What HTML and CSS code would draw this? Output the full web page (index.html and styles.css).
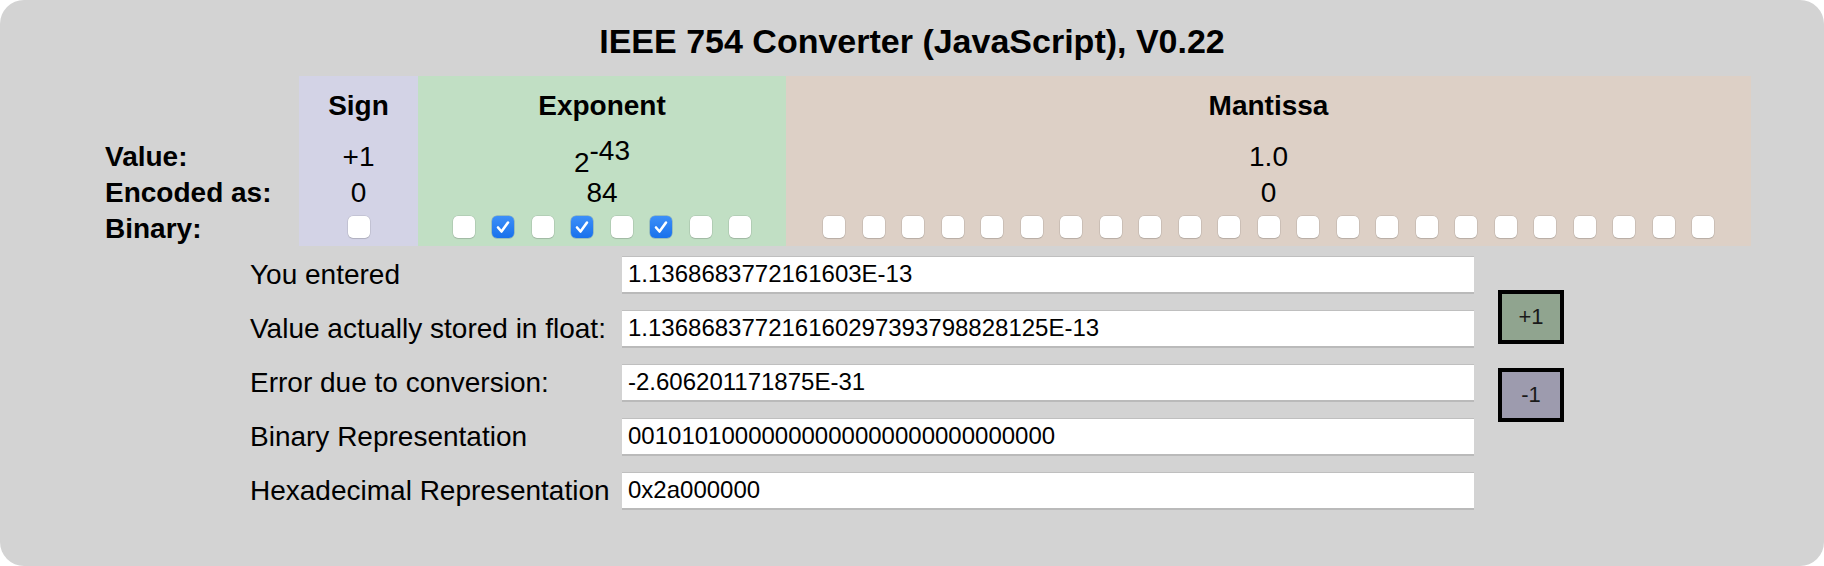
FILE: index.html
```html
<!DOCTYPE html>
<html>

<head>
    <link rel="stylesheet" href="styles.css">
</head>

<body>

    <div class="panel">
        <h1 class="title">IEEE 754 Converter (JavaScript), V0.22</h1>

        <div class="fields">
            <div class="cell"></div>
            <div class="cell head sign">Sign</div>
            <div class="cell head exp">Exponent</div>
            <div class="cell head man">Mantissa</div>

            <div class="cell label">Value:</div>
            <div class="cell val sign">+1</div>
            <div class="cell val exp"><span class="power">2<sup>-43</sup></span></div>
            <div class="cell val man">1.0</div>

            <div class="cell label">Encoded as:</div>
            <div class="cell val sign">0</div>
            <div class="cell val exp">84</div>
            <div class="cell val man">0</div>

            <div class="cell label">Binary:</div>
            <div class="cell bits sign">
                <span class="bit"></span>
            </div>
            <div class="cell bits exp">
                <span class="bit"></span>
                <span class="bit on"><svg viewBox="0 0 22 22"><path d="M6 11.5l3.5 4L16 6.5"/></svg></span>
                <span class="bit"></span>
                <span class="bit on"><svg viewBox="0 0 22 22"><path d="M6 11.5l3.5 4L16 6.5"/></svg></span>
                <span class="bit"></span>
                <span class="bit on"><svg viewBox="0 0 22 22"><path d="M6 11.5l3.5 4L16 6.5"/></svg></span>
                <span class="bit"></span>
                <span class="bit"></span>
            </div>
            <div class="cell bits man">
                <span class="bit"></span><span class="bit"></span><span class="bit"></span><span class="bit"></span>
                <span class="bit"></span><span class="bit"></span><span class="bit"></span><span class="bit"></span>
                <span class="bit"></span><span class="bit"></span><span class="bit"></span><span class="bit"></span>
                <span class="bit"></span><span class="bit"></span><span class="bit"></span><span class="bit"></span>
                <span class="bit"></span><span class="bit"></span><span class="bit"></span><span class="bit"></span>
                <span class="bit"></span><span class="bit"></span><span class="bit"></span>
            </div>
        </div>

        <div class="results">
            <div class="rows">
                <label class="row-label">You entered</label>
                <input class="row-input" type="text" value="1.1368683772161603E-13">

                <label class="row-label">Value actually stored in float:</label>
                <input class="row-input" type="text" value="1.136868377216160297393798828125E-13" readonly>

                <label class="row-label">Error due to conversion:</label>
                <input class="row-input" type="text" value="-2.606201171875E-31" readonly>

                <label class="row-label">Binary Representation</label>
                <input class="row-input" type="text" value="00101010000000000000000000000000">

                <label class="row-label">Hexadecimal Representation</label>
                <input class="row-input" type="text" value="0x2a000000">
            </div>

            <div class="steppers">
                <button class="step plus">+1</button>
                <button class="step minus">-1</button>
            </div>
        </div>
    </div>

</body>

</html>
```

FILE: styles.css
```css
body {
    font-family: "Liberation Sans", Arial, Helvetica, sans-serif;
    margin: 0;
    background-color: #fff;
    color: #000;
}

.panel {
    height: 566px;
    background-color: #d3d3d3;
    border-radius: 24px;
    overflow: hidden;
}

.title {
    margin: 21px 0 15px;
    font-size: 34px;
    line-height: 40px;
    text-align: center;
}

/* sign / exponent / mantissa table */
.fields {
    display: grid;
    grid-template-columns: 194px 119px 368px 965px;
    grid-template-rows: 63px 36px 36px 34.5px;
    margin-left: 105px;
    font-size: 28px;
}

.cell {
    line-height: 36px;
}

.sign {
    background-color: #d3d3e6;
}

.exp {
    background-color: #c1dfc4;
}

.man {
    background-color: #ddd0c6;
}

.head {
    padding-top: 12px;
    font-weight: bold;
    text-align: center;
}

.label {
    font-weight: bold;
}

.val {
    text-align: center;
}

.power {
    position: relative;
    top: 6px;
}

.power sup {
    font-size: inherit;
    line-height: 0;
    vertical-align: 12px;
}

.bits {
    display: flex;
    justify-content: center;
    gap: 17.5px;
    padding-top: 5px;
}

.bit {
    width: 22px;
    height: 22px;
    border-radius: 5px;
    background-color: #fff;
    box-shadow: 0 0 0 0.5px rgba(0, 0, 0, 0.14), 0 1px 1px rgba(0, 0, 0, 0.1);
}

.bit.on {
    background: linear-gradient(#3d8ff8, #1871ec);
    box-shadow: 0 0 0 0.5px rgba(0, 60, 160, 0.4);
}

.bit svg {
    display: block;
    width: 22px;
    height: 22px;
    fill: none;
    stroke: #fff;
    stroke-width: 2.6;
    stroke-linecap: round;
    stroke-linejoin: round;
}

/* results */
.results {
    display: flex;
    margin: 10px 0 0 250px;
}

.rows {
    display: grid;
    grid-template-columns: 372px 852px;
    row-gap: 16px;
}

.row-label {
    font-size: 28px;
    line-height: 38px;
}

.row-input {
    box-sizing: border-box;
    height: 38px;
    margin: 0;
    padding: 0 6px;
    border: none;
    border-top: 1px solid #bfbfbf;
    border-bottom: 2px solid #bababa;
    background-color: #fff;
    font-family: "Liberation Sans", Arial, Helvetica, sans-serif;
    font-size: 24px;
    color: #000;
    outline: none;
}

.steppers {
    display: flex;
    flex-direction: column;
    gap: 24px;
    margin-left: 24px;
    padding-top: 34.5px;
}

.step {
    box-sizing: border-box;
    width: 66px;
    height: 54px;
    border: 4px solid #000;
    border-radius: 0;
    font-family: "Liberation Sans", Arial, Helvetica, sans-serif;
    font-size: 22px;
    color: #1a1a1a;
    cursor: pointer;
}

.plus {
    background-color: #90a48f;
}

.minus {
    background-color: #9d9bae;
}
```
